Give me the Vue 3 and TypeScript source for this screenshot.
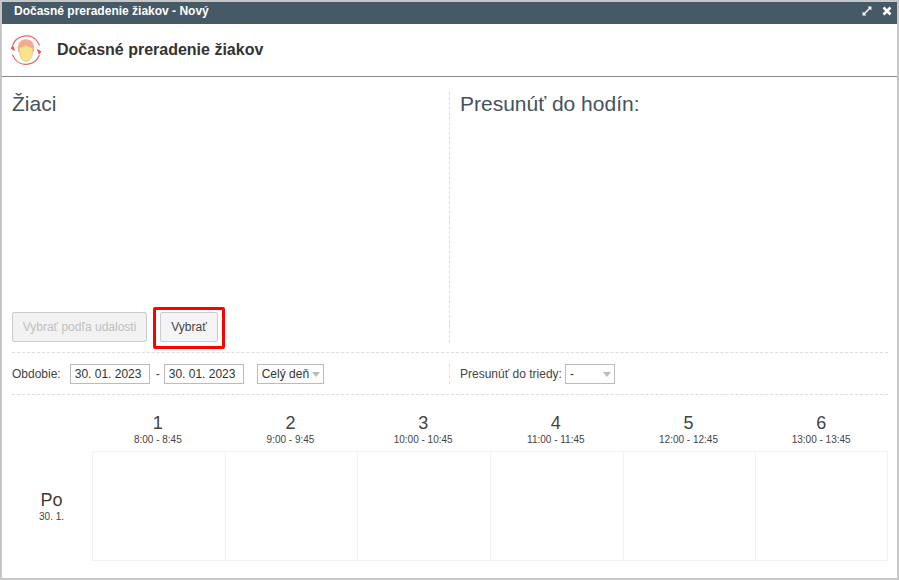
<script setup lang="ts">
const periods = [
  { n: 1, t: '8:00 - 8:45' },
  { n: 2, t: '9:00 - 9:45' },
  { n: 3, t: '10:00 - 10:45' },
  { n: 4, t: '11:00 - 11:45' },
  { n: 5, t: '12:00 - 12:45' },
  { n: 6, t: '13:00 - 13:45' },
]
</script>

<template>
  <div class="win">
    <div class="titlebar">
      <span class="wtitle">Dočasné preradenie žiakov - Nový</span>
      <div class="wicons">
        <svg width="10" height="10" viewBox="0 0 10 10"><path d="M5.600 .6H9.400V4.400L8 3 3 8 4.400 9.400H.6V5.600L2 7 7 2z" fill="#fff" /></svg>
        <svg width="10" height="10" viewBox="0 0 10 10"><path d="M1.500 1.500l7 7M8.500 1.500l-7 7" stroke="#fff" stroke-width="2.600" fill="none" /></svg>
      </div>
    </div>
    <div class="header">
      <svg class="logo" width="32" height="32" viewBox="0 0 32 32">
        <path d="M2.600 11.500A14.300 14.300 0 0 1 27.500 7.500L29.600 11.500" fill="none" stroke="#e26a6a" stroke-width="1.200" />
        <path d="M29.400 21A14.300 14.300 0 0 1 4.500 24.500L2.400 20.500" fill="none" stroke="#e26a6a" stroke-width="1.200" />
        <path d="M.6 14.500L5.200 17.200 3 11.200z" fill="#d9534f" />
        <path d="M31.400 17.500L26.800 14.800 29 20.800z" fill="#d9534f" />
        <path d="M8.200 18C6.500 9.500 10.500 5.200 16 5.200S25.500 9.500 23.800 18z" fill="#f4ab8f" />
        <path d="M9.200 13.500C12 13.500 14 12.500 15.500 11 17 12.500 20 13.500 22.800 13.500 23.300 20 21 27.200 16 27.500 11 27.200 8.700 20 9.200 13.500z" fill="#fbe28f" stroke="#d9b96f" stroke-width=".6" />
      </svg>
      <span class="htitle">Dočasné preradenie žiakov</span>
    </div>
    <div class="body">
      <div class="cols">
        <div class="col left">
          <h2>Žiaci</h2>
          <div class="btns">
            <button class="btn disabled" type="button">Vybrať podľa udalosti</button>
            <span class="highlight"><button class="btn pick" type="button">Vybrať</button></span>
          </div>
        </div>
        <div class="col right">
          <h2>Presunúť do hodín:</h2>
        </div>
      </div>
      <div class="filters">
        <div class="f-left">
          <span class="lbl">Obdobie:</span>
          <span class="field date">30. 01. 2023</span>
          <span class="dash">-</span>
          <span class="field date d2">30. 01. 2023</span>
          <span class="field sel day">Celý deň<i class="arrow"></i></span>
        </div>
        <div class="f-right">
          <span class="lbl">Presunúť do triedy:</span>
          <span class="field sel cls">-<i class="arrow"></i></span>
        </div>
      </div>
      <div class="timetable">
        <div class="corner"></div>
        <div v-for="p in periods" :key="p.n" class="phead">
          <div class="pn">{{ p.n }}</div>
          <div class="pt">{{ p.t }}</div>
        </div>
        <div class="day-h">
          <div class="dn">Po</div>
          <div class="dd">30. 1.</div>
        </div>
        <div v-for="p in periods" :key="'c' + p.n" class="cell"></div>
      </div>
    </div>
  </div>
</template>

<style>
html, body { margin: 0; padding: 0; background: #fff; }
</style>

<style scoped>
.win {
  width: 899px;
  height: 580px;
  box-sizing: border-box;
  border: 2px solid #c6c6c6;
  background: #fff;
  display: flex;
  flex-direction: column;
  font-family: "Liberation Sans", Arial, sans-serif;
  color: #333;
  overflow: hidden;
}
.titlebar {
  height: 22px;
  flex: none;
  box-sizing: border-box;
  background: #455a66;
  color: #fff;
  display: flex;
  align-items: center;
  justify-content: space-between;
  padding: 0 5px 4px 12px;
}
.wtitle { font-size: 12px; font-weight: 700; }
.wicons { display: flex; gap: 10px; align-items: center; }
.wicons svg { display: block; }
.header {
  height: 53px;
  flex: none;
  box-sizing: border-box;
  border-bottom: 1px solid #8a8a8a;
  display: flex;
  align-items: center;
  padding: 0 0 0 8px;
}
.logo { flex: none; }
.htitle { margin-left: 15px; font-size: 16px; font-weight: 700; color: #333; }
.body { flex: 1; padding: 0 9px 0 10px; display: flex; flex-direction: column; }
.cols {
  display: flex;
  height: 276px;
  flex: none;
  box-sizing: border-box;
  border-bottom: 1px dashed #ddd;
  padding-top: 15px;
  padding-bottom: 9px;
}
.col { display: flex; flex-direction: column; }
.left { width: 438px; box-sizing: border-box; border-right: 1px dashed #ddd; justify-content: space-between; }
.right { flex: 1; padding-left: 10px; }
h2 { margin: 0; font-size: 21px; font-weight: 400; color: #44525f; line-height: 24px; }
.btns { display: flex; align-items: center; height: 43px; margin-bottom: -6px; }
.btn {
  height: 30px;
  box-sizing: border-box;
  border: 1px solid #ccc;
  border-radius: 2px;
  background: #f5f5f8;
  color: #444;
  font: 12px "Liberation Sans", Arial, sans-serif;
  padding: 0;
  display: block;
}
.btn.pick { width: 58px; }
.btn.disabled { width: 135px; margin-bottom: 2px; color: #c0c0c0; background: #f2f2f2; }
.highlight {
  display: block;
  margin-left: 6px;
  border: 3px solid #f00;
  border-radius: 2px;
  padding: 2px 4px 4px;
}
.filters {
  display: flex;
  height: 42px;
  flex: none;
  box-sizing: border-box;
  border-bottom: 1px dashed #ddd;
  font-size: 12px;
  color: #444;
}
.f-left, .f-right { display: flex; align-items: center; }
.f-left { width: 438px; box-sizing: border-box; position: relative; }
.f-right { flex: 1; padding-left: 10px; }
.f-left::after {
  content: "";
  position: absolute;
  right: 0;
  top: 11px;
  bottom: 10px;
  border-right: 1px dashed #ddd;
}
.lbl { white-space: nowrap; }
.field {
  height: 20px;
  box-sizing: border-box;
  border: 1px solid #bbb;
  display: flex;
  align-items: center;
  padding-left: 4px;
  color: #333;
  font-size: 12px;
  white-space: nowrap;
  background: #fff;
}
.date { width: 80px; margin-left: 9px; }
.d2 { margin-left: 0; }
.dash { margin: 0 4px 0 6px; }
.sel { position: relative; justify-content: space-between; padding-right: 3px; }
.day { width: 67px; margin-left: 13px; }
.cls { width: 50px; margin-left: 3px; }
.arrow {
  width: 0;
  height: 0;
  border-left: 4px solid transparent;
  border-right: 4px solid transparent;
  border-top: 5px solid #bbb;
  margin-top: 1px;
}
.timetable {
  display: grid;
  grid-template-columns: 80px repeat(6, 1fr);
  grid-template-rows: 56px 110px;
  flex: none;
  width: 876px;
}
.phead {
  display: flex;
  flex-direction: column;
  align-items: center;
  justify-content: flex-end;
  padding: 0 1px 5px 0;
  color: #444;
}
.pn { font-size: 18px; line-height: 20px; }
.pt { font-size: 10px; line-height: 13px; }
.day-h { display: flex; flex-direction: column; align-items: center; justify-content: center; padding: 1px 1px 0 0; }
.dn { font-size: 18px; line-height: 20px; color: #4a3a34; }
.dd { font-size: 10px; line-height: 12px; margin-top: 1px; color: #444; }
.cell {
  box-sizing: border-box;
  border: 1px solid #f2f2f2;
  border-right: 0;
}
.cell:last-child { border-right: 1px solid #f2f2f2; }
</style>
